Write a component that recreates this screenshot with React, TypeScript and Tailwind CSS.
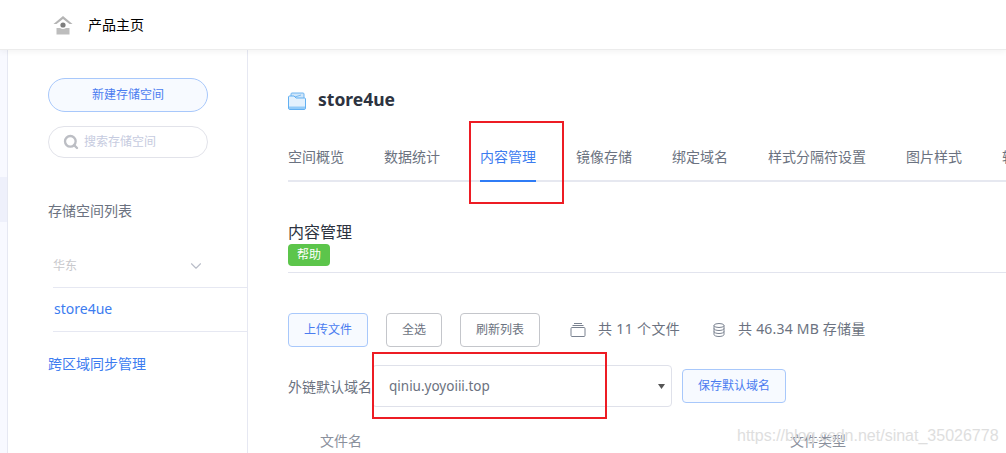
import { Search, ChevronDown } from "lucide-react";

const tabs = ["空间概览", "数据统计", "内容管理", "镜像存储", "绑定域名", "样式分隔符设置", "图片样式", "转码样式"];

function HomeIcon() {
  return (
    <svg width="20" height="20" viewBox="0 0 20 20" className="shrink-0">
      <path d="M0.5 9 L10 1 L19.500 9 L16.500 9 L10 4 L3.500 9 Z" fill="#b4b4b4" />
      <path d="M4 9.500 L10 5 L16 9.500 L16 13 L4 13 Z" fill="#ffffff" />
      <circle cx="10" cy="10" r="2.600" fill="#7d7d7d" />
      <path d="M3.500 13 H7 Q10 15 13 13 H16.500 V19.500 H3.500 Z" fill="#bdbdbd" />
    </svg>
  );
}

function FolderIcon() {
  return (
    <svg width="18" height="18" viewBox="0 0 18 18" className="mt-[3px] shrink-0">
      <path d="M3 5 V2 Q3 1 4 1 H15 Q16 1 16 2 V8 H3 Z" fill="#cfe6fa" stroke="#6fb4f0" strokeWidth="1" />
      <path d="M4 6 L13 3" stroke="#7dbcf0" strokeWidth="1" fill="none" />
      <path d="M0.500 5 Q0.500 4 1.500 4 H6 L8 6 H16.500 Q17.500 6 17.500 7 V16 Q17.500 17.500 16 17.500 H2 Q0.500 17.500 0.500 16 Z" fill="#e3f1fd" stroke="#62b0f2" strokeWidth="1" />
      <rect x="1" y="14.500" width="16" height="2.500" fill="#93cbf8" />
    </svg>
  );
}

function BoxIcon() {
  return (
    <svg width="16" height="14" viewBox="0 0 16 14" className="shrink-0" fill="none" stroke="#7a8290" strokeWidth="1">
      <path d="M4 0.500 H12" />
      <path d="M2.500 2.500 H13.500" />
      <rect x="1" y="4.500" width="14" height="9" rx="1" />
    </svg>
  );
}

function DbIcon() {
  return (
    <svg width="12" height="14" viewBox="0 0 12 14" className="shrink-0" fill="none" stroke="#7a8290" strokeWidth="1">
      <ellipse cx="6" cy="2.500" rx="5" ry="2" />
      <path d="M1 2.500 V11.500 C1 12.600 3.200 13.500 6 13.500 C8.800 13.500 11 12.600 11 11.500 V2.500" />
      <path d="M1 5.500 C1 6.600 3.200 7.500 6 7.500 C8.800 7.500 11 6.600 11 5.500" />
      <path d="M1 8.500 C1 9.600 3.200 10.500 6 10.500 C8.800 10.500 11 9.600 11 8.500" />
    </svg>
  );
}

function Sidebar() {
  return (
    <aside className="h-full w-[240px] shrink-0 border-r border-[#e6e8f2] bg-white pl-10 pt-[28px]">
      <button className="flex h-[34px] w-[160px] items-center justify-center rounded-full border border-[#a8c8fb] bg-[#f7faff] text-[12px] text-[#4a7cf0]">
        新建存储空间
      </button>
      <div className="mt-[14px] flex h-8 w-[160px] items-center gap-[5px] rounded-full border border-[#e2e3ea] pl-[14px] text-[12px] text-[#c6cbe0]">
        <Search size={16} strokeWidth={3.500} className="text-[#bcbec4]" />
        搜索存储空间
      </div>
      <div className="mt-[43px] h-5 text-[14px] leading-5 text-[#6b7280]">存储空间列表</div>
      <div className="ml-[5px] mt-[32px] flex h-[35px] items-start justify-between border-b border-[#e6e8f2] pr-[42px] pt-[3px] text-[12px] leading-5 text-[#c8c8cc]">
        华东
        <ChevronDown size={18} strokeWidth={1.500} className="mt-[1px] text-[#b9bdc8]" />
      </div>
      <div className="ml-[5px] flex h-11 items-center border-b border-[#e6e8f2] pb-[2px] pl-[1px] text-[14px] text-[#3c7cf0]">
        store4ue
      </div>
      <div className="mt-[22px] h-5 text-[14px] leading-5 text-[#3c7cf0]">跨区域同步管理</div>
    </aside>
  );
}

export default function App() {
  return (
    <div className="relative h-[453px] w-[1006px] overflow-hidden bg-white font-['Noto_Sans','Noto_Sans_CJK_SC',sans-serif]">
      <header className="relative z-10 flex h-[50px] items-center gap-[15px] border-b border-[#ececec] bg-white pl-[53px] shadow-[0_2px_6px_rgba(0,0,0,0.05)]">
        <HomeIcon />
        <span className="text-[14px] text-black">产品主页</span>
      </header>

      <div className="flex h-[403px]">
        <div className="w-2 shrink-0 border-r border-[#e6e8f2] bg-[#f8f9ff]">
          <div className="mt-[127px] h-[45px] bg-[#eef0fb]" />
        </div>
        <Sidebar />

        <main className="min-w-0 flex-1 pl-10">
          <div className="mt-[41px] flex h-4 items-center gap-3">
            <FolderIcon />
            <h1 className="text-[17.5px] font-bold text-[#2d3340]">store4ue</h1>
          </div>

          <nav className="mt-[31px] flex h-[44px] gap-10 whitespace-nowrap border-b-2 border-[#e6e8f0] pt-[9px] text-[14px] text-[#6b7280]">
            {tabs.map((tab) =>
              tab === "内容管理" ? (
                <span key={tab} className="h-[35px] shrink-0 border-b-2 border-[#2f7cf6] leading-5 text-[#3c7cf0]">
                  {tab}
                </span>
              ) : (
                <span key={tab} className="shrink-0 leading-5">
                  {tab}
                </span>
              ),
            )}
          </nav>

          <div className="mt-[38px] h-[24px] text-[16px] leading-6 text-[#2d3340]">内容管理</div>
          <div className="h-[29px] border-b border-[#e2e4ee]">
            <span className="flex h-[22px] w-[42px] items-center justify-center rounded bg-[#5cc54b] text-[12px] text-white">
              帮助
            </span>
          </div>

          <div className="mt-10 flex h-[34px] items-center text-[12px]">
            <button className="h-[34px] w-20 rounded border border-[#a8c8fb] bg-[#f7faff] text-[#4a7cf0]">上传文件</button>
            <button className="ml-[18px] h-[34px] w-14 rounded border border-[#c4c6cb] text-[#6b7280]">全选</button>
            <button className="ml-[18px] h-[34px] w-20 rounded border border-[#c4c6cb] text-[#6b7280]">刷新列表</button>
            <span className="ml-[30px]"><BoxIcon /></span>
            <span className="mb-[3px] ml-[12px] text-[14px] tracking-[0.35px] text-[#6b7280]">共 11 个文件</span>
            <span className="ml-[33px]"><DbIcon /></span>
            <span className="mb-[3px] ml-[13px] text-[14px] tracking-[0.2px] text-[#6b7280]">共 46.34 MB 存储量</span>
          </div>

          <div className="mt-[18px] flex h-[42px] items-center text-[14px] text-[#6b7280]">
            <span className="w-[84px] shrink-0 whitespace-nowrap text-[14px]">外链默认域名</span>
            <div className="flex h-[42px] w-[300px] items-center justify-between rounded border border-[#dfe1ea] pl-[16px] pr-[6px] text-[13.5px] text-[#6b7280]">
              qiniu.yoyoiii.top
              <svg width="7" height="5" viewBox="0 0 7 5">
                <path d="M0 0 H7 L3.500 5 Z" fill="#555555" />
              </svg>
            </div>
            <button className="ml-[10px] h-[34px] w-[104px] rounded border border-[#a8c8fb] bg-[#f7faff] text-[12px] text-[#4a7cf0]">
              保存默认域名
            </button>
          </div>

          <div className="mt-6 flex h-5 text-[14px] leading-5 text-[#8a909c]">
            <span className="ml-8 w-[470px] shrink-0">文件名</span>
            <span>文件类型</span>
          </div>
        </main>
      </div>

      {/* annotations drawn over the screenshot */}
      <div className="absolute left-[469px] top-[121px] h-[83px] w-[95px] border-2 border-[#ed1c24]" />
      <div className="absolute left-[372px] top-[352px] h-[67px] w-[235px] border-2 border-[#ed1c24]" />
      <div className="absolute left-[737px] top-[426px] font-['Liberation_Sans',sans-serif] text-[16px] leading-5 text-[#dedede]">
        https://blog.csdn.net/sinat_35026778
      </div>
    </div>
  );
}
